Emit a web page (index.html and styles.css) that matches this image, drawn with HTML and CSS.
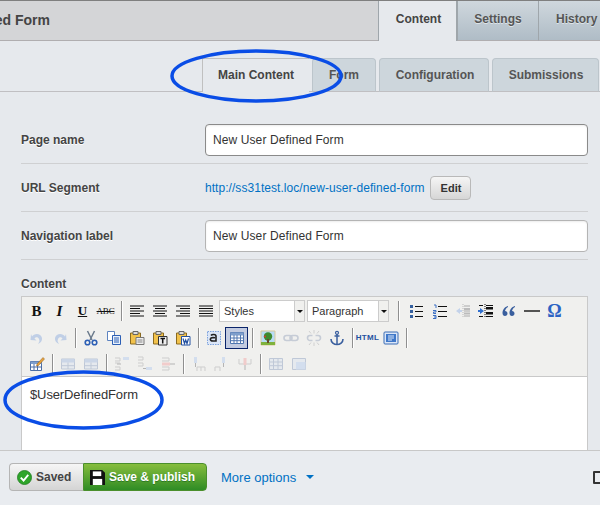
FILE: index.html
```html
<!DOCTYPE html>
<html lang="en">
<head>
<meta charset="utf-8">
<title>New User Defined Form</title>
<link rel="stylesheet" href="styles.css">
</head>
<body>
<div class="cms">
  <header class="head">
    <h1 class="title">New User Defined Form</h1>
    <nav class="maintabs">
      <a class="maintab active">Content</a>
      <a class="maintab">Settings</a>
      <a class="maintab history">History</a>
    </nav>
  </header>
  <nav class="subtabs">
    <a class="subtab active">Main Content</a>
    <a class="subtab form-tab">Form</a>
    <a class="subtab config-tab">Configuration</a>
    <a class="subtab subm-tab">Submissions</a>
  </nav>
  <main class="form">
    <div class="row">
      <label class="label">Page name</label>
      <div class="input strong">New User Defined Form</div>
    </div>
    <div class="row">
      <label class="label">URL Segment</label>
      <div class="urlvalue"><a class="url">http://ss31test.loc/new-user-defined-form</a><button class="edit">Edit</button></div>
    </div>
    <div class="row">
      <label class="label">Navigation label</label>
      <div class="input">New User Defined Form</div>
    </div>
    <div class="content-field">
      <label class="label content-label">Content</label>
      <div class="editor">
        <div class="toolbar">
          <div class="tbrow first">
            <span class="tb"><span class="g-b">B</span></span>
            <span class="tb"><span class="g-i">I</span></span>
            <span class="tb"><span class="g-u">U</span></span>
            <span class="tb"><span class="g-s">ABC</span></span>
            <i class="sep"></i>
            <span class="tb"><svg viewBox="0 0 16 16" class="ic"><path d="M1 3h14M1 5.500h10M1 8h14M1 10.500h10M1 13h14" stroke="#111" fill="none"/></svg></span>
            <span class="tb"><svg viewBox="0 0 16 16" class="ic"><path d="M1 3h14M3 5.500h10M1 8h14M3 10.500h10M1 13h14" stroke="#111" fill="none"/></svg></span>
            <span class="tb"><svg viewBox="0 0 16 16" class="ic"><path d="M1 3h14M5 5.500h10M1 8h14M5 10.500h10M1 13h14" stroke="#111" fill="none"/></svg></span>
            <span class="tb"><svg viewBox="0 0 16 16" class="ic"><path d="M1 3h14M1 5.500h14M1 8h14M1 10.500h14M1 13h14" stroke="#111" fill="none"/></svg></span>
            <span class="select styles"><span class="select-text">Styles</span><span class="select-arrow"></span></span>
            <span class="select para"><span class="select-text">Paragraph</span><span class="select-arrow"></span></span>
            <i class="sep after-select"></i>
            <span class="tb"><svg viewBox="0 0 16 16" class="ic"><path d="M6 3.500h8M6 8.500h8M6 13.500h8" stroke="#111" fill="none"/><path d="M1 2h3v3H1zM1 7h3v3H1zM1 12h3v3H1z" fill="#35609f"/></svg></span>
            <span class="tb"><svg viewBox="0 0 16 16" class="ic"><path d="M6 3.500h9M6 8.500h9M6 13.500h9" stroke="#111" fill="none"/><path d="M2 2h2v3M1 7.500h3v1.500H1.500v1.500H4M1 12.500h3v3H1M2 14h2" stroke="#3b6fc4" fill="none"/></svg></span>
            <span class="tb"><svg viewBox="0 0 16 16" class="ic"><path d="M8 1v14" stroke="#bbb" stroke-dasharray="1 1"/><path d="M9 3h6M9 8h6M9 13h6" stroke="#aaa" fill="none"/><path d="M9 5h6v2H9zM9 9.500h6v2H9z" fill="#bbb"/><path d="M1 8l4-3v2h2v2H5v2z" fill="#c3d2ea"/></svg></span>
            <span class="tb"><svg viewBox="0 0 16 16" class="ic"><path d="M7 1v14" stroke="#111" stroke-dasharray="1 1"/><path d="M8 2.500h7M8 13.500h7M1 2.500h4M1 13.500h4" stroke="#111" fill="none"/><path d="M8 4h7v2.500H8zM8 9h7v2.500H8z" fill="#111"/><path d="M6 8L2 5v2H0v2h2v2z" fill="#2f6fd0"/></svg></span>
            <span class="tb"><svg viewBox="0 0 16 16" class="ic"><path d="M7 3C3.500 4 1.500 7 1.500 10c0 2 1 3 2.500 3s2.500-1 2.500-2.500S5.500 8 4 8c.3-1.500 1.300-3 3-4zM14 3c-3.500 1-5.500 4-5.500 7 0 2 1 3 2.500 3s2.500-1 2.500-2.500-1-2.500-2.500-2.500c.3-1.500 1.300-3 3-4z" fill="#3a5f9e"/></svg></span>
            <span class="tb"><svg viewBox="0 0 16 16" class="ic"><path d="M0 8h16" stroke="#111" stroke-width="1.400"/></svg></span>
            <span class="tb"><span class="g-o">Ω</span></span>
          </div>
          <div class="tbrow">
            <span class="tb"><svg viewBox="0 0 16 16" class="ic"><path d="M3 6.500c2-3.500 9-3.500 10 1.500.4 3-1.500 5-4 6 1-1.500 2-3 1-5-1-2.500-3.500-2-4.500-.5L7.500 10.500 1.500 10 2 4z" fill="#c0cfe6"/></svg></span>
            <span class="tb"><svg viewBox="0 0 16 16" class="ic"><path d="M13 6.500c-2-3.500-9-3.500-10 1.500-.4 3 1.500 5 4 6-1-1.500-2-3-1-5 1-2.500 3.500-2 4.500-.5L8.500 10.500l6-.5L14 4z" fill="#c0cfe6"/></svg></span>
            <i class="sep"></i>
            <span class="tb"><svg viewBox="0 0 16 16" class="ic"><path d="M4.500 1l4.500 9M11.500 1L7 10" stroke="#6b7a8c" stroke-width="1.500" fill="none"/><circle cx="4.500" cy="12.500" r="2.300" fill="none" stroke="#2c5fb5" stroke-width="1.600"/><circle cx="11.500" cy="12.500" r="2.300" fill="none" stroke="#2c5fb5" stroke-width="1.600"/></svg></span>
            <span class="tb"><svg viewBox="0 0 16 16" class="ic"><path d="M1.500 1.500h7v9h-7z" fill="#fff" stroke="#5d83c0"/><path d="M6.500 5.500h8v9h-8z" fill="#e7f0fb" stroke="#2c5fb5"/><path d="M8 8h5M8 10h5M8 12h5" stroke="#2c5fb5"/></svg></span>
            <span class="tb"><svg viewBox="0 0 16 16" class="ic"><path d="M1.500 3h10v11h-10z" fill="#f2c24b" stroke="#8a6a20"/><path d="M4 1.500h5v3H4z" fill="#ddd" stroke="#666"/><path d="M7 7.500h8v7H7z" fill="#eee" stroke="#777"/><path d="M8.500 10h5M8.500 12h5" stroke="#888"/></svg></span>
            <span class="tb"><svg viewBox="0 0 16 16" class="ic"><path d="M1.500 3h10v11h-10z" fill="#f2c24b" stroke="#8a6a20"/><path d="M4 1.500h5v3H4z" fill="#ddd" stroke="#666"/><path d="M6.500 6.500h8.500v8.500H6.500z" fill="#eee" stroke="#333"/><path d="M8.500 8.500h4.500M10.700 8.500v5" stroke="#111" stroke-width="1.500"/></svg></span>
            <span class="tb"><svg viewBox="0 0 16 16" class="ic"><path d="M1.500 3h10v11h-10z" fill="#f2c24b" stroke="#8a6a20"/><path d="M4 1.500h5v3H4z" fill="#ddd" stroke="#666"/><path d="M6.500 6.500h8.500v8.500H6.500z" fill="#fff" stroke="#23509f"/><path d="M8 8.500l1.500 5 1.200-3.500 1.300 3.500L13.500 8.500" stroke="#23509f" fill="none" stroke-width="1.200"/></svg></span>
            <i class="sep"></i>
            <span class="tb"><svg viewBox="0 0 16 16" class="ic"><path d="M1.500 1.500h13v13h-13z" fill="#dbe6f7" stroke="#7da2de" stroke-dasharray="1.500 1"/><path d="M5 5.500c1-1.500 5-1.500 5 .5v5H7c-2 0-3-1-2.600-2.300C4.700 7.500 7 7.500 9 7.800" fill="none" stroke="#222" stroke-width="1.600"/></svg></span>
            <span class="tb on"><svg viewBox="0 0 16 16" class="ic"><path d="M1.500 2.500h13v11h-13z" fill="#fff" stroke="#5077b0"/><path d="M1.500 2.500h13v3h-13z" fill="#7e9ecb"/><path d="M1.500 8h13M1.500 10.700h13M5 5v8M8 5v8M11.500 5v8" stroke="#5077b0"/></svg></span>
            <i class="sep"></i>
            <span class="tb"><svg viewBox="0 0 16 16" class="ic"><path d="M1 1h14v14H1z" fill="#b8dcf5" stroke="#d9c99a"/><path d="M1 12h14v3H1z" fill="#7fb23c"/><circle cx="8" cy="6.500" r="4.200" fill="#3f8a2e"/><path d="M7 9h2v4H7z" fill="#6a4a2a"/><circle cx="5" cy="6.500" r="1" fill="#d33"/></svg></span>
            <span class="tb"><svg viewBox="0 0 16 16" class="ic"><rect x="1" y="5.500" width="8" height="5" rx="2.500" fill="none" stroke="#c6ccd6" stroke-width="1.600"/><rect x="7" y="5.500" width="8" height="5" rx="2.500" fill="none" stroke="#c6ccd6" stroke-width="1.600"/></svg></span>
            <span class="tb"><svg viewBox="0 0 16 16" class="ic"><path d="M6.500 5.500H4a2.500 2.500 0 000 5h2.500M9.500 5.500H12a2.500 2.500 0 010 5H9.500" fill="none" stroke="#c6ccd6" stroke-width="1.600"/><path d="M8 0v3.500M8 12.500V16M3 1l2 2.500M13 1l-2 2.500M3 15l2-2.500M13 15l-2-2.500" stroke="#d0d0d0"/></svg></span>
            <span class="tb"><svg viewBox="0 0 16 16" class="ic"><circle cx="8" cy="2.800" r="1.500" fill="none" stroke="#3a5f9e" stroke-width="1.200"/><path d="M8 4v10M5.500 6h5" stroke="#3a5f9e" stroke-width="1.500"/><path d="M2 9c0 3.500 3 5.500 6 5.500s6-2 6-5.500" fill="none" stroke="#3a5f9e" stroke-width="1.600"/></svg></span>
            <i class="sep"></i>
            <span class="tb"><span class="g-h">HTML</span></span>
            <span class="tb"><svg viewBox="0 0 16 16" class="ic"><rect x="1" y="2" width="14" height="12" rx="1" fill="#dbe6f7" stroke="#3a6db5"/><path d="M3 4h10v8H3z" fill="#3f78c9"/><path d="M5 6h6M5 8h6M5 10h4" stroke="#dbe6f7"/></svg></span>
            <i class="sep"></i>
          </div>
          <div class="tbrow">
            <span class="tb"><svg viewBox="0 0 16 16" class="ic"><path d="M1.500 5.500h11v9h-11z" fill="#fff" stroke="#4a6da5"/><path d="M1.500 5.500h11v2.500h-11z" fill="#7e9ecb"/><path d="M1.500 11h11M5 8v6.500M8.500 8v6.500" stroke="#4a6da5"/><path d="M8 8l6-6.500 1.500 1.500-6 6.500-2 .5z" fill="#e8a33a" stroke="#8a5a20" stroke-width=".5"/></svg></span>
            <i class="sep"></i>
            <span class="tb faded"><svg viewBox="0 0 16 16" class="ic"><path d="M1.500 3h13v10h-13z" fill="#e4e8ef" stroke="#b7c2d4"/><path d="M1.500 3h13v3.500h-13z" fill="#c5d2e6"/><path d="M8 6.500V13M1.500 9.700h13" stroke="#b7c2d4"/></svg></span>
            <span class="tb faded"><svg viewBox="0 0 16 16" class="ic"><path d="M1.500 3h13v10h-13z" fill="#e4e8ef" stroke="#b7c2d4"/><path d="M1.500 3h13v3.500h-13z" fill="#c5d2e6"/><path d="M8 6.500V13M1.500 9.700h13" stroke="#b7c2d4"/></svg></span>
            <i class="sep"></i>
            <span class="tb faded"><svg viewBox="0 0 16 16" class="ic"><path d="M1 2h5v3H1M1 11h5v3H1M1 7h5" fill="none" stroke="#c9c9c9"/><path d="M9 1h6v3H9z" fill="#cfdcee"/><path d="M3 8h4" stroke="#aaa"/></svg></span>
            <span class="tb faded"><svg viewBox="0 0 16 16" class="ic"><path d="M1 1h5v3H1M1 7h5v3H1" fill="none" stroke="#c9c9c9"/><path d="M9 11h6v3H9z" fill="#cfdcee"/><path d="M6 12.500h3" stroke="#aaa"/></svg></span>
            <span class="tb faded"><svg viewBox="0 0 16 16" class="ic"><path d="M2 2h7v3H2M2 11h7v3H2" fill="none" stroke="#c9c9c9"/><path d="M2 6.500h8v3H2z" fill="#f2c6c6"/><path d="M10 8h5" stroke="#aaa"/></svg></span>
            <i class="sep"></i>
            <span class="tb faded"><svg viewBox="0 0 16 16" class="ic"><path d="M3 1h3v6H3z" fill="#cfdcee"/><path d="M4.500 7v4" stroke="#aaa"/><path d="M6 15v-4h4v4M10 11h4v4" fill="none" stroke="#c9c9c9"/></svg></span>
            <span class="tb faded"><svg viewBox="0 0 16 16" class="ic"><path d="M1 15v-4h5v4" fill="none" stroke="#c9c9c9"/><path d="M8 1h3v6H8z" fill="#cfdcee"/><path d="M9.500 7v4" stroke="#aaa"/></svg></span>
            <span class="tb faded"><svg viewBox="0 0 16 16" class="ic"><path d="M2 3v5h12V3" fill="none" stroke="#c9c9c9"/><path d="M6.500 2h3v7h-3z" fill="#f2c6c6"/><path d="M8 9v5" stroke="#aaa"/></svg></span>
            <i class="sep"></i>
            <span class="tb faded"><svg viewBox="0 0 16 16" class="ic"><path d="M1.500 2.500h13v11h-13z" fill="#e4e8ef" stroke="#b7c2d4"/><path d="M1.500 6h13M1.500 9.700h13M5.500 2.500v11M10 2.500v11" stroke="#b7c2d4"/></svg></span>
            <span class="tb faded"><svg viewBox="0 0 16 16" class="ic"><path d="M1.500 2.500h13v11h-13z" fill="#e4e8ef" stroke="#b7c2d4"/><path d="M5 6h9.500v7.500H5z" fill="#cfdcee"/></svg></span>
          </div>
        </div>
        <div class="editarea">$UserDefinedForm</div>
      </div>
    </div>
  </main>
  <footer class="foot">
    <button class="saved"><svg viewBox="0 0 16 16" class="check"><circle cx="8" cy="8" r="7.500" fill="#2fa52a" stroke="#1c7a1c" stroke-width=".8"/><path d="M4 8.200l3 3 5-6" fill="none" stroke="#fff" stroke-width="2"/></svg>Saved</button>
    <button class="publish"><svg viewBox="0 0 16 16" class="disk"><path d="M0 0h13l3 3v13H0z" fill="#111"/><path d="M3 1.500h9v5H3z" fill="#fff"/><path d="M3 9.500h10V16H3z" fill="#fff"/></svg>Save &amp; publish</button>
    <a class="more">More options</a><span class="caret"></span>
    <span class="preview"></span>
  </footer>
  <svg class="marks" viewBox="0 0 600 505" aria-hidden="true">
    <ellipse cx="256.500" cy="76" rx="84.500" ry="25" />
    <ellipse cx="83.500" cy="400" rx="78.500" ry="28" />
  </svg>
</div>
</body>
</html>
```
FILE: styles.css
```css
* { box-sizing: border-box; }
html, body { margin: 0; padding: 0; }
body { width: 600px; height: 505px; overflow: hidden; background: #e6e9ed; font-family: "Liberation Sans", Arial, sans-serif; color: #444; }
.cms { position: relative; width: 600px; height: 505px; display: flex; flex-direction: column; overflow: hidden; }

.head { height: 41px; flex: none; display: flex; align-items: stretch; justify-content: space-between; background: #d4d5d7; border-top: 1px solid #7f7f7f; border-bottom: 1px solid #b0aeb0; overflow: visible; }
.title { margin: 0 0 0 -108px; font-size: 14px; font-weight: bold; line-height: 38px; color: #444; white-space: nowrap; }
.maintabs { display: flex; width: 222px; flex: none; margin-bottom: -1px; overflow: hidden; }
.maintab { flex: none; width: 81px; font-size: 12px; font-weight: bold; line-height: 37px; text-align: center; color: #555; background: linear-gradient(#cfd7dd, #afbcc6); border-left: 1px solid #9fa6ab; text-shadow: 0 1px 0 #dfe5e9; border-bottom: 1px solid #b0aeb0; }
.maintab.active { width: 79px; color: #444; background: #e6e9ed; border-bottom: 0; border-right: 1px solid #9fa6ab; text-shadow: none; padding-left: 2px; }
.maintab.history { width: 62px; padding-left: 17px; text-align: left; }

.subtabs { height: 51px; flex: none; padding: 17px 1px 0 0; display: flex; justify-content: flex-end; gap: 3px; background: linear-gradient(#c0bfc2, #c0bfc2) 0 50px / 100% 1px no-repeat; }
.subtab { height: 34px; font-size: 12px; font-weight: bold; line-height: 32px; text-align: center; color: #555; background: #cdd6dc; border: 1px solid #bcc5cb; border-bottom-color: #c0bfc2; border-radius: 4px 4px 0 0; }
.subtab.active { width: 107px; color: #444; background: #e6e9ed; border-width: 1px 0 0 1px; border-color: #c0c0c0; border-radius: 0; }
.form-tab { width: 64px; }
.config-tab { width: 110px; padding-left: 2px; }
.subm-tab { width: 107px; padding-left: 1px; }

.form { flex: 1; min-height: 0; overflow: hidden; padding: 24px 12px 0 21px; }
.row { display: flex; align-items: center; height: 48px; padding-top: 1px; border-bottom: 1px solid #cfd0d2; }
.label { flex: none; width: 184px; font-size: 12px; font-weight: bold; color: #444; text-shadow: 0 1px 0 #fff; }
.input { flex: 1; height: 32px; font-size: 12px; line-height: 30px; padding-left: 7px; color: #333; background: #fff; border: 1px solid #b4b4b4; border-radius: 4px; box-shadow: inset 0 1px 2px rgba(0,0,0,.08); letter-spacing: .1px; }
.input.strong { border-color: #8a8a8a; }
.urlvalue { display: flex; align-items: center; }
.url { font-size: 12px; color: #0071c4; letter-spacing: .05px; }
.edit { margin-left: 6px; width: 41px; height: 24px; padding: 0; font: bold 11px "Liberation Sans", Arial, sans-serif; color: #333; background: linear-gradient(#f5f5f5, #d6d6d6); border: 1px solid #b9b9b9; border-radius: 4px; }

.content-field { padding-top: 17px; }
.content-label { display: block; width: auto; line-height: 15px; margin-bottom: 4px; }
.editor { border: 1px solid #c9c9c9; background: #fff; height: 300px; }
.toolbar { background: #f0f0ee; border-bottom: 1px solid #c9c9c9; padding-left: 3px; }
.tbrow { display: flex; align-items: center; height: 26px; padding-top: 1px; }
.tbrow.first { height: 27px; }
.tb { flex: none; width: 23px; height: 22px; display: flex; align-items: center; justify-content: center; }
.ic { width: 16px; height: 16px; display: block; }
.tb.on { background: #c2cbe0; outline: 1px solid #0a246a; outline-offset: -1px; }
.faded { opacity: .85; }
.sep { flex: none; width: 1px; height: 20px; margin: 0 3px 0 4px; background: #8f8f8f; box-shadow: 1px 0 0 #fff; }
.sep.after-select { margin: 0 6px 0 9px; }
.g-b { font: bold 15px "Liberation Serif", serif; color: #111; }
.g-i { font: italic bold 15px "Liberation Serif", serif; color: #111; }
.g-u { font: bold 13px "Liberation Serif", serif; color: #111; text-decoration: underline; }
.g-s { font: 9px "Liberation Serif", serif; color: #111; text-decoration: line-through; letter-spacing: -.2px; }
.g-o { font: bold 18px "Liberation Serif", serif; color: #2c63c4; }
.g-h { font: bold 8px "Liberation Sans", sans-serif; color: #23509f; letter-spacing: .3px; }
.select { flex: none; height: 22px; margin-left: 2px; display: flex; background: #fff; border: 1px solid #ccc; font-size: 11px; color: #333; line-height: 20px; }
.select-text { flex: 1; padding-left: 4px; }
.select-arrow { flex: none; width: 10px; background: #f0f0ee; border-left: 1px solid #ccc; display: flex; align-items: center; justify-content: center; }
.select-arrow::after { content: ""; border: 3px solid transparent; border-top: 3px solid #111; border-bottom: 0; }
.styles { width: 86px; }
.para { width: 82px; }
.editarea { padding: 10px 0 0 8px; font-size: 13px; line-height: 15px; color: #333; letter-spacing: -.12px; }

.foot { height: 55px; flex: none; background: #e9ecf0; border-top: 1px solid #c8c8c8; padding: 12px 0 0 9px; display: flex; align-items: flex-start; overflow: hidden; }
.saved { width: 74px; height: 28px; padding: 0 0 0 7px; display: flex; align-items: center; gap: 4px; font: bold 12px "Liberation Sans", Arial, sans-serif; color: #444; background: linear-gradient(#f6f6f6, #d4d4d4); border: 1px solid #b5b5b5; border-right: 0; border-radius: 4px 0 0 4px; }
.check { width: 15px; height: 15px; }
.publish { width: 124px; height: 28px; padding: 0 0 0 6px; display: flex; align-items: center; gap: 4px; font: bold 12px "Liberation Sans", Arial, sans-serif; color: #fff; background: linear-gradient(#86bd3d, #2f8c25); border: 1px solid #4a8f2c; border-radius: 0 4px 4px 0; text-shadow: 0 1px 0 #2e7a22; }
.disk { width: 15px; height: 15px; }
.more { margin-left: 14px; font-size: 13px; line-height: 28px; margin-top: 1px; color: #0071c4; }
.caret { margin: 12px 0 0 10px; border: 4px solid transparent; border-top: 4px solid #0071c4; border-bottom: 0; }
.preview { flex: none; width: 12px; height: 13px; margin: 8px -5px 0 auto; background: #e9ecf0; border: 2px solid #333; border-radius: 1px; }

.marks { position: absolute; left: 0; top: 0; width: 600px; height: 505px; pointer-events: none; }
.marks ellipse { fill: none; stroke: #0a4de6; stroke-width: 3.5; }
```
